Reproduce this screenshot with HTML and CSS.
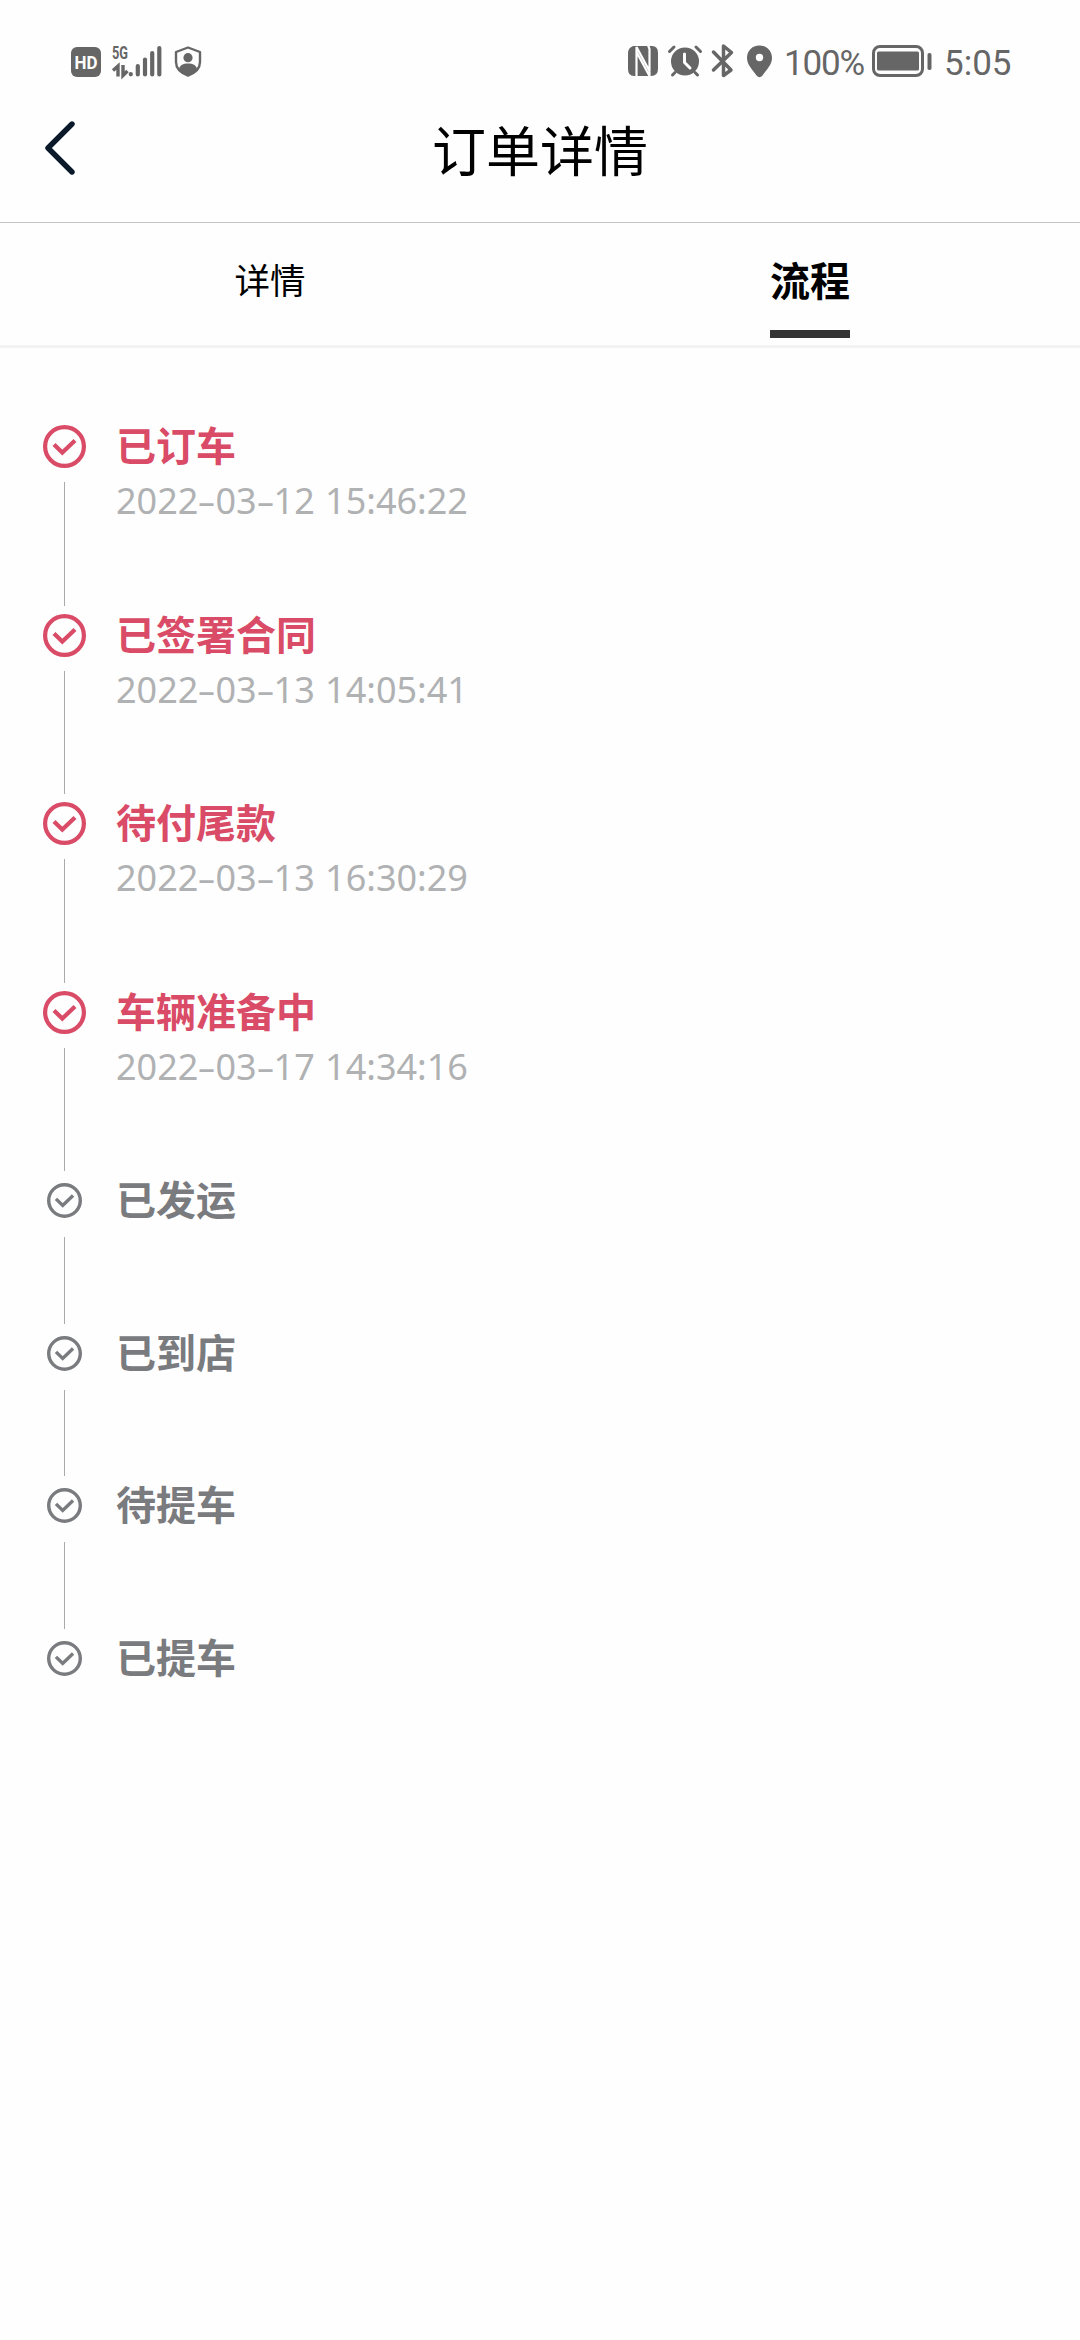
FILE: index.html
```html
<!DOCTYPE html>
<html lang="zh-CN">
<head>
<meta charset="utf-8">
<title>订单详情</title>
<link rel="stylesheet" href="styles.css">
</head>
<body>
<svg class="defs" aria-hidden="true">
  <symbol id="check" viewBox="0 0 43 43">
    <circle cx="21.5" cy="21.5" r="19.4"/>
    <path d="M11 19.5 19.3 27.600 32 15.400"/>
  </symbol>
</svg>

<div class="status">
  <svg class="status-left" viewBox="0 0 140 40">
    <rect x="1" y="7" width="30" height="30" rx="6"/>
    <text class="hd" x="4.5" y="29" textLength="23" lengthAdjust="spacingAndGlyphs">HD</text>
    <text class="net" x="42" y="19" textLength="16" lengthAdjust="spacingAndGlyphs">5G</text>
    <path class="line arrows" d="M43 30.5 48 26V36.500M53 25V35.500L57.500 31"/>
    <path class="line bars" d="M60.8 34v.3M67.8 26v8.5M75 19.5v15M82.2 13v21.5M89.3 8v26.5"/>
    <path class="line shield" d="M118 7.5 130 12V22C130 29 125 33 118 35.5 111 33 106 29 106 22V12Z"/>
    <circle cx="118" cy="17.700" r="4.600"/>
    <path d="M109 29C110 25 113 23.500 118 23.500S126 25 127 29C125 32.500 122 34.500 118 36 114 34.500 111 32.500 109 29Z"/>
  </svg>
  <div class="status-right">
    <svg class="status-icons" viewBox="0 0 150 40">
      <path d="M6 6H25Q31 6 31 13V29Q31 36 24 36H7Q1 36 1 29V13Q1 8 6 6Z"/>
      <path class="cut" d="M9.500 37V7L22.500 31V15M21 5 22.500 9V36L9.500 12"/>
      <circle cx="58" cy="21.500" r="14"/>
      <path class="line" d="M42.500 11.500 47 7M69 7l4.500 4.500M48 32.500 45.500 35M68 32.500 70.500 35"/>
      <path class="cut hands" d="M57.500 14V22.500L63 28"/>
      <path class="line bt" d="M86.500 12 104 30 96.500 35.500V6L104.500 12.500 86.500 30"/>
      <path d="M132.500 5.500C125 5.500 120 11 120 18 120 25 126 30 129.500 35.500Q132.500 39 135.500 35.500C139 30 145 25 145 18 145 11 140 5.500 132.500 5.500Z"/>
      <circle class="hole" cx="132.500" cy="17.500" r="3.700"/>
    </svg>
    <span class="percent">100%</span>
    <svg class="battery" viewBox="0 0 60 34">
      <rect class="line" x="1.500" y="2.500" width="49" height="29" rx="6.500"/>
      <rect x="5" y="7.500" width="42" height="19" rx="1.500"/>
      <rect x="55.500" y="9" width="4" height="17" rx="1.800"/>
    </svg>
    <span class="clock">5:05</span>
  </div>
</div>

<header class="header">
  <svg class="back" viewBox="0 0 30 54"><path d="M27 3 3 27 27 51"/></svg>
  <h1 class="title">订单详情</h1>
</header>

<nav class="tabs">
  <div class="tab">详情</div>
  <div class="tab active">流程</div>
</nav>

<main class="timeline">
  <section class="step done">
    <div class="rail"><svg class="mark"><use href="#check"/></svg></div>
    <div class="info"><h2 class="name">已订车</h2><time class="time">2022<i>-</i>03<i>-</i>12 15:46:22</time></div>
  </section>
  <section class="step done">
    <div class="rail"><svg class="mark"><use href="#check"/></svg></div>
    <div class="info"><h2 class="name">已签署合同</h2><time class="time">2022<i>-</i>03<i>-</i>13 14:05:41</time></div>
  </section>
  <section class="step done">
    <div class="rail"><svg class="mark"><use href="#check"/></svg></div>
    <div class="info"><h2 class="name">待付尾款</h2><time class="time">2022<i>-</i>03<i>-</i>13 16:30:29</time></div>
  </section>
  <section class="step done">
    <div class="rail"><svg class="mark"><use href="#check"/></svg></div>
    <div class="info"><h2 class="name">车辆准备中</h2><time class="time">2022<i>-</i>03<i>-</i>17 14:34:16</time></div>
  </section>
  <section class="step">
    <div class="rail"><svg class="mark"><use href="#check"/></svg></div>
    <div class="info"><h2 class="name">已发运</h2></div>
  </section>
  <section class="step">
    <div class="rail"><svg class="mark"><use href="#check"/></svg></div>
    <div class="info"><h2 class="name">已到店</h2></div>
  </section>
  <section class="step">
    <div class="rail"><svg class="mark"><use href="#check"/></svg></div>
    <div class="info"><h2 class="name">待提车</h2></div>
  </section>
  <section class="step">
    <div class="rail"><svg class="mark"><use href="#check"/></svg></div>
    <div class="info"><h2 class="name">已提车</h2></div>
  </section>
</main>
</body>
</html>
```
FILE: styles.css
```css
* { box-sizing: border-box; }

body {
  margin: 0;
  min-height: 2340px;
  background: #fefefe;
  color: #000;
  font-family: "Noto Sans CJK SC", sans-serif;
}

svg { display: block; flex: none; }
.defs { width: 0; height: 0; position: absolute; }

/* System status bar */
.status {
  display: flex;
  justify-content: space-between;
  height: 100px;
  padding: 40px 72px 0 70px;
  color: #666;
  fill: #666;
}
.status-left { width: 140px; height: 40px; }
.status-right { display: flex; }
.status-icons { width: 150px; height: 40px; margin-right: 7px; }
.line { fill: none; stroke: #666; stroke-width: 3; stroke-linecap: round; }
.bars { stroke-width: 4.2; }
.arrows { stroke-width: 3.4; stroke-linecap: butt; }
.shield { stroke-width: 2.4; stroke-linejoin: round; }
.bt { stroke-width: 3.5; stroke-linejoin: round; }
.cut { fill: none; stroke: #fefefe; stroke-width: 2.2; }
.hands { stroke-width: 3; stroke-linecap: round; }
.hole { fill: #fefefe; }
.hd { fill: #fefefe; font: 700 19px Roboto, sans-serif; }
.net { font: 700 18px Roboto, sans-serif; }
.percent, .clock {
  height: 40px;
  font: 35px/47px Roboto, sans-serif;
  white-space: nowrap;
}
.percent { width: 88px; letter-spacing: -1.2px; }
.battery { width: 60px; height: 34px; margin-top: 4px; }
.clock { width: 65px; margin-left: 11px; padding-left: 1px; }

/* Page header */
.header {
  display: grid;
  grid-template-columns: 30px 1fr 30px;
  align-items: start;
  height: 123px;
  padding: 0 45px;
  border-bottom: 1px solid #c4c4c4;
}
.back {
  width: 30px;
  height: 54px;
  margin-top: 21px;
  fill: none;
  stroke: #0b1a2b;
  stroke-width: 5.4;
  stroke-linecap: round;
  stroke-linejoin: round;
}
.title {
  margin: 9px 0 0;
  text-align: center;
  font-size: 54px;
  line-height: 80px;
  font-weight: 400;
}

/* Tabs */
.tabs {
  display: grid;
  grid-template-columns: 1fr 1fr;
  justify-items: center;
  height: 125px;
  border-bottom: 3px solid #f3f3f3;
}
.tab { height: 115px; padding-top: 27px; font-size: 35.5px; line-height: 58px; }
.tab.active { font-size: 40px; font-weight: 700; border-bottom: 8px solid #333; }

/* Order progress */
.timeline { padding: 77px 43px 0; }
.step {
  display: grid;
  grid-template-columns: 43px 1fr;
  column-gap: 30px;
  height: 152.67px;
  color: #797b7e;
}
.step.done { height: 188.5px; color: #d94b66; }
.rail { display: flex; flex-direction: column; align-items: center; padding: 4px 0 8px; }
.rail::after { content: ""; flex: 1; width: 1px; margin-top: 19px; background: #aaa; }
.step:last-child .rail::after { display: none; }
.mark {
  width: 35px;
  height: 35px;
  fill: none;
  stroke: currentColor;
  stroke-width: 4.2;
}
.done .rail { padding-top: 0; }
.done .rail::after { margin-top: 14px; }
.done .mark { width: 43px; height: 43px; }
.name { margin: -11px 0 0; font-size: 40px; line-height: 60px; font-weight: 700; }
.time {
  display: block;
  margin-top: 2px;
  color: #b0b1b3;
  font: 36px/50px "Noto Sans", sans-serif;
  word-spacing: 1px;
}
.time i {
  display: inline-block;
  width: 17px;
  text-align: center;
  font-style: normal;
  transform: scaleX(1.6);
}
```
